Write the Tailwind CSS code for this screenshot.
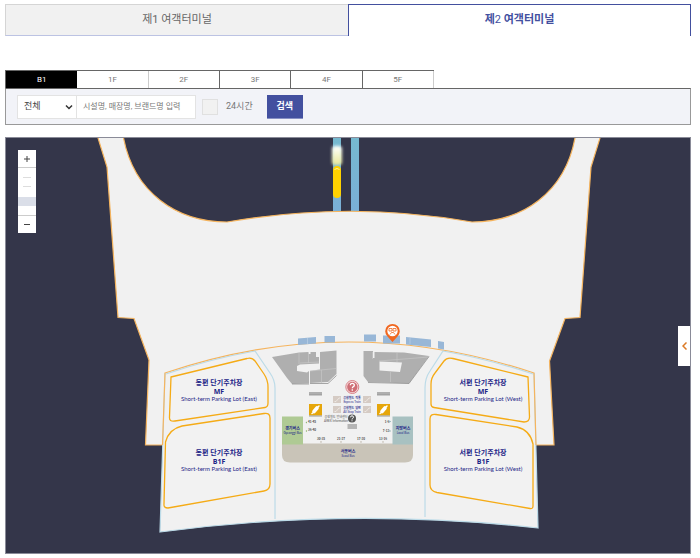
<!DOCTYPE html>
<html lang="ko">
<head>
    <meta charset="UTF-8">
    <meta name="viewport" content="width=device-width, initial-scale=1.0">
    <title>여객터미널 지도</title>
    <script src="https://cdn.jsdelivr.net/npm/@tailwindcss/browser@4"></script>
</head>
<body class="bg-white pt-1 pl-[5px] pr-[9px] font-[Roboto,'Noto_Sans_CJK_KR',sans-serif] text-[#666]">
    <!-- terminal tabs -->
    <nav class="grid grid-cols-2 h-8 text-[11px] text-center">
        <a href="#t1" class="flex items-center justify-center bg-[#f1f1f1] border-t border-l border-b border-t-[#d5d5d5] border-l-[#d5d5d5] border-b-[#bcc3e3]">제1 여객터미널</a>
        <a href="#t2" class="flex items-center justify-center border-t border-x border-[#43509f] font-bold text-[#43509f]"><span>제<span class="font-normal">2</span> 여객터미널</span></a>
    </nav>

    <main class="mt-[34px]">
        <!-- floors -->
        <div class="grid grid-cols-6 w-[429px] h-[18px] text-[8px] text-[#777] border-t border-l border-[#666]">
            <button class="bg-black text-white">B1</button>
            <button class="border-r border-[#ccc]">1F</button>
            <button class="border-r border-[#666]">2F</button>
            <button class="border-r border-[#666]">3F</button>
            <button class="border-r border-[#666]">4F</button>
            <button class="border-r border-[#ccc]">5F</button>
        </div>
        <form class="flex items-center h-[37px] pl-[11px] bg-[#f2f3f8] border border-[#999] border-t-[#666] text-[9px]">
            <div class="relative">
                <select aria-label="시설 구분" class="appearance-none block w-[60px] h-6 pl-1.5 bg-white border border-[#e3e3e3] text-[9px] text-[#444]">
                    <option>전체</option>
                </select>
                <svg class="absolute right-1 top-2 w-2 h-2 pointer-events-none" viewBox="0 0 8 8" fill="none" stroke="#333" stroke-width="1.5"><path d="M1 2.5l3 3 3-3"/></svg>
            </div>
            <input type="text" aria-label="검색어" placeholder="시설명, 매장명, 브랜드명 입력" class="w-[119px] h-6 pl-1.5 bg-white border border-l-0 border-[#e3e3e3] text-[8px] placeholder:text-[#777]">
            <input type="checkbox" id="allday" class="appearance-none w-4 h-4 ml-1.5 bg-[#f1f1f1] border border-[#e0e0e0]">
            <label for="allday" class="ml-2 text-[#777]">24시간</label>
            <button type="submit" class="flex items-center justify-center w-9 h-6 pt-0.5 ml-3.5 bg-[#43509f] border-b border-[#8790c4] font-bold text-white">검색</button>
        </form>

        <!-- map -->
        <section class="relative mt-3 bg-[#34364a] border border-[#8a8b98]">
            <svg class="block w-full h-auto" viewBox="6 138 684 415" font-family="'Noto Sans CJK KR', sans-serif" text-anchor="middle">
                <defs>
                    <linearGradient id="rail" x1="0" y1="0" x2="0" y2="1">
                        <stop offset="0" stop-color="#76b9cf"/>
                        <stop offset="1" stop-color="#7aafd8"/>
                    </linearGradient>
                    <linearGradient id="beam" x1="0" y1="0" x2="0" y2="1">
                        <stop offset="0" stop-color="#fff"/>
                        <stop offset="1" stop-color="#e8e796"/>
                    </linearGradient>
                    <filter id="glow" x="-50%" y="-50%" width="200%" height="200%"><feGaussianBlur stdDeviation="1.5"/></filter>
                </defs>

                <!-- shuttle train -->
                <g fill="url(#rail)">
                    <rect x="333" y="137" width="8" height="78"/>
                    <rect x="351" y="137" width="8" height="78"/>
                </g>
                <rect x="332" y="146" width="10" height="19" rx="3" fill="url(#beam)" filter="url(#glow)"/>
                <rect x="333" y="166" width="8" height="32" rx="4" fill="#ffd200"/>
                <path d="M334.5 169.500q2.500-2 5 0" fill="none" stroke="#fff3a0"/>

                <!-- building and ground -->
                <path d="M98 134L98 138L107 167L118 317.500L134 318.500L149 360L145.500 445H554L549.500 361L565 318.500L580 317.500L591 167L600 138V134H575V138C565 192 523 222 472 222C390 207.500 310 207.500 227 222C176 222 134 192 123.500 138V134Z" fill="#f1f1f1" stroke="#f5b45e" stroke-width="1.200"/>
                <path d="M165 373Q348 311 534 373L538 528Q349 507 160 532Z" fill="#f1f1f1"/>
                <path d="M165 373L160 532Q349 507 538 528L534 373" fill="none" stroke="#bcdbe8" stroke-width="1.200"/>
                <path d="M162.500 445L165 373Q348 311 534 373L536 445" fill="none" stroke="#f5b45e" stroke-width="1.200"/>
                <g fill="none" stroke="#bcdbe8" stroke-width="1.200">
                    <path d="M166 374Q210 359 255 351L270 373Q275 380 275 388V519"/>
                    <path d="M533 374Q488 359 443 351L430 371Q425 378 425 388V517"/>
                </g>
                <g fill="#f2f2f2" stroke="#f5ab16" stroke-width="1.300">
                    <path d="M171 377L247 358.500Q252 357 255 361L264 374Q268 380 268 387V403Q268 407 265 407.500L175 421Q169 422 169.500 417Z"/>
                    <path d="M182 426L264 413.500Q270 412.500 270 418V484Q270 490 264 491L168 508Q163.500 508 164 504L165.500 442Q169 429 182 426Z"/>
                    <path d="M528 377L453 358.500Q447 357 444 361L435 373Q431 378 431 384V404Q431 407 434 407.500L524 422Q529.500 422 529.500 417Z"/>
                    <path d="M517 427L436 414.500Q430 413.500 430 419V485Q430 491 437 492.500L530 508.500Q533 509 533 506V444Q530 430 517 427Z"/>
                </g>

                <!-- entrances -->
                <g fill="#98b7d7">
                    <path d="M298 338.500l18-1.500v6.500l-18 1.500zM324.500 336h10.500v6.500h-10.500zM364 334.500h12v7h-12zM383 335.500h17v8h-17zM406 337l25 2.500v7.500l-25-2.500zM438 341l6 1v7.500l-6-1z"/>
                </g>
                <path d="M307.500 338v6M410 338v6" stroke="#c3d5e8" stroke-width=".6"/>

                <!-- shops -->
                <g fill="#afafaf">
                    <path d="M272 357L299 352.500L308.500 352V354H310.500V352L316 352V357H319V363.500L300 364.500L297 366V371L307 372.500L309 371V383.500L292 384L287 378Z"/>
                    <path d="M320 352L336.500 350.500V374L328 382L310 383V371L320 369.500Z"/>
                    <path d="M363.500 351H373V358H374.500V352L404 352.500L429 356L409 383.500L368 382L363.500 376ZM379.500 361.500V370.500L400 372L402 362.500Z" fill-rule="evenodd"/>
                    <path d="M309 392h13v3h-13zM377 392h13v3h-13z"/>
                </g>
                <path d="M299 353v11M308.500 353v10M300 363l19-1M310 371l26-2.500M321.500 370v13M372.500 352v7M379 361l50-4M390.500 372v10M397 353v9" fill="none" stroke="#c6c6c6" stroke-width=".7"/>
                <path d="M292 384h17M310 383.500h18l8.500-8M368 382.500l41 1 20-27M309 395h13M377 395h13" fill="none" stroke="#929292" stroke-width=".8"/>

                <!-- bus areas -->
                <path d="M282 443.500H413V455Q413 462.500 405 462.500H290Q282 462.500 282 455Z" fill="#c9c4b8"/>
                <rect x="282" y="416.500" width="21" height="28" fill="#afca94"/>
                <rect x="392.500" y="416.500" width="20.500" height="28" fill="#a8c1c1"/>
                <g fill="#1c2487" font-size="4" font-weight="700">
                    <text x="292.500" y="430">경기버스</text>
                    <text x="403" y="430">지방버스</text>
                    <text x="348" y="453">서울버스</text>
                    <g font-family="Lato, sans-serif" font-size="3" font-weight="400">
                        <text x="292.500" y="434">Gyeonggi Bus</text>
                        <text x="403" y="434">Local Bus</text>
                        <text x="348" y="457">Seoul Bus</text>
                    </g>
                </g>
                <g fill="#444" font-size="3" font-weight="700">
                    <text x="312" y="423">41-45</text>
                    <text x="312" y="431">36-40</text>
                    <text x="321" y="440">30-35</text>
                    <text x="341" y="440">21-27</text>
                    <text x="361" y="440">17-20</text>
                    <text x="383" y="440">13-16</text>
                    <text x="387" y="423">1-6</text>
                    <text x="386" y="432">7-12</text>
                </g>
                <path d="M305.500 422.500l1.500-1v2zM305.500 431l1.500-1v2z" fill="#8fb66f"/>
                <path d="M391 421.500l-1.500-1v2zM391 431l-1.500-1v2z" fill="#75a3a3"/>
                <path d="M321 443l-1-1.500h2zM341 443l-1-1.500h2zM361 443l-1-1.500h2zM383 443l-1-1.500h2z" fill="#b5ac9a"/>

                <!-- escalators -->
                <g fill="#e6a60b">
                    <rect x="309" y="404" width="13" height="11.500"/>
                    <rect x="377" y="404" width="13" height="11.500"/>
                </g>
                <path d="M309 416h13M377 416h13" stroke="#999"/>
                <g stroke="#fff" stroke-width="3.600" stroke-linecap="round">
                    <path d="M314 411.500l3-3.500M382 411.500l3-3.500"/>
                    <path d="M312 413.500l2-1.500M318 407l1-1M380 413.500l2-1.500M386 407l1-1" stroke-width="1.500"/>
                </g>
                <g fill="#d5cbc4">
                    <rect x="333" y="396" width="8" height="7"/>
                    <rect x="363" y="396" width="8" height="7"/>
                    <rect x="333" y="406" width="8" height="7"/>
                    <rect x="363" y="406" width="8" height="7"/>
                </g>
                <path d="M334.500 401.500h1.500l3-3.500h1.500M364.500 401.500h1.500l3-3.500h1.500M334.500 411.500h1.500l3-3.500h1.500M364.500 411.500h1.500l3-3.500h1.500" fill="none" stroke="#f1ece8" stroke-width=".8"/>
                <g fill="#1c2487" font-size="3" font-weight="700">
                    <text x="352" y="399">공항철도 직통</text>
                    <text x="352" y="409">공항철도 일반</text>
                    <g font-family="Lato, sans-serif" font-weight="400">
                        <text x="352" y="403">Express Train</text>
                        <text x="352" y="413">All Stop Train</text>
                    </g>
                </g>
                <g fill="#555" font-size="3">
                    <text x="336" y="418">공항철도 안내센터</text>
                    <text x="336" y="422" font-family="Lato, sans-serif">AREX Information</text>
                </g>

                <!-- information -->
                <circle cx="352.300" cy="387" r="6.500" fill="#f6dfe0" stroke="#d98288" stroke-width="1"/>
                <circle cx="352.300" cy="387" r="5.200" fill="#cf6f76"/>
                <path d="M350.300 385.300q0-2 2-2t2 1.900q0 1-1 1.500t-1 1.600M352.300 389.300v1.400" fill="none" stroke="#fff" stroke-width="1.300"/>
                <rect x="347.500" y="424" width="9.500" height="5" fill="#b5b5b5"/>
                <circle cx="352" cy="418.500" r="4" fill="#555"/>
                <path d="M350.500 417.300q0-1.500 1.500-1.500t1.500 1.400q0 .8-.8 1.100t-.7 1.200M352 420.300v1" fill="none" stroke="#fff"/>

                <!-- current place -->
                <path d="M392.500 342L387.500 336.500A7.300 7.300 0 1 1 397.500 336.500Z" fill="#f0671f"/>
                <circle cx="392.500" cy="331" r="5.200" fill="#fff"/>
                <path d="M389 328.500h3v2.500h-3zM393 328.500h3v2.500h-3zM390 334.500l1.500-2h2l1.500 2" fill="none" stroke="#f0671f" stroke-width=".8"/>

                <!-- parking names -->
                <g fill="#1c2487" font-size="7" font-weight="700">
                    <text x="219" y="385">동편 단기주차장</text>
                    <text x="219" y="455">동편 단기주차장</text>
                    <text x="483" y="385">서편 단기주차장</text>
                    <text x="483" y="455">서편 단기주차장</text>
                    <g font-family="'Open Sans', sans-serif">
                        <text x="219" y="394">MF</text>
                        <text x="219" y="464">B1F</text>
                        <text x="483" y="394">MF</text>
                        <text x="483" y="464">B1F</text>
                    </g>
                    <g font-family="Lato, sans-serif" font-size="6" font-weight="400">
                        <text x="219" y="401">Short-term Parking Lot (East)</text>
                        <text x="219" y="471">Short-term Parking Lot (East)</text>
                        <text x="483" y="401">Short-term Parking Lot (West)</text>
                        <text x="483" y="471">Short-term Parking Lot (West)</text>
                    </g>
                </g>
            </svg>

            <!-- zoom control -->
            <div class="absolute left-3 top-3 w-[18px] bg-white text-[#444]">
                <button aria-label="확대" class="flex items-center justify-center w-full h-[18px] border-b border-[#ccc]">
                    <svg class="w-1.5 h-1.5" viewBox="0 0 6 6" stroke="currentColor"><path d="M3 0v6M0 3h6"/></svg>
                </button>
                <div class="flex flex-col items-center h-[47px] pt-[9px]">
                    <div class="w-2 h-px bg-[#ddd]"></div>
                    <div class="w-2 h-px mt-2 bg-[#ddd]"></div>
                    <div class="w-full h-[9px] mt-2.5 bg-[#dadee8]"></div>
                </div>
                <button aria-label="축소" class="flex items-center justify-center w-full h-[18px] border-t border-[#ccc]">
                    <svg class="w-1.5 h-1.5" viewBox="0 0 6 6" stroke="currentColor"><path d="M0 2.500h6"/></svg>
                </button>
            </div>
            <button aria-label="목록 열기" class="absolute right-0 top-[188px] flex items-center justify-center w-3 h-10 bg-white">
                <svg class="w-[5px] h-2" viewBox="0 0 5 8" fill="none" stroke="#dc7a25" stroke-width="1.500"><path d="M4.500 .5L1 4l3.500 3.500"/></svg>
            </button>
        </section>
    </main>
</body>
</html>
